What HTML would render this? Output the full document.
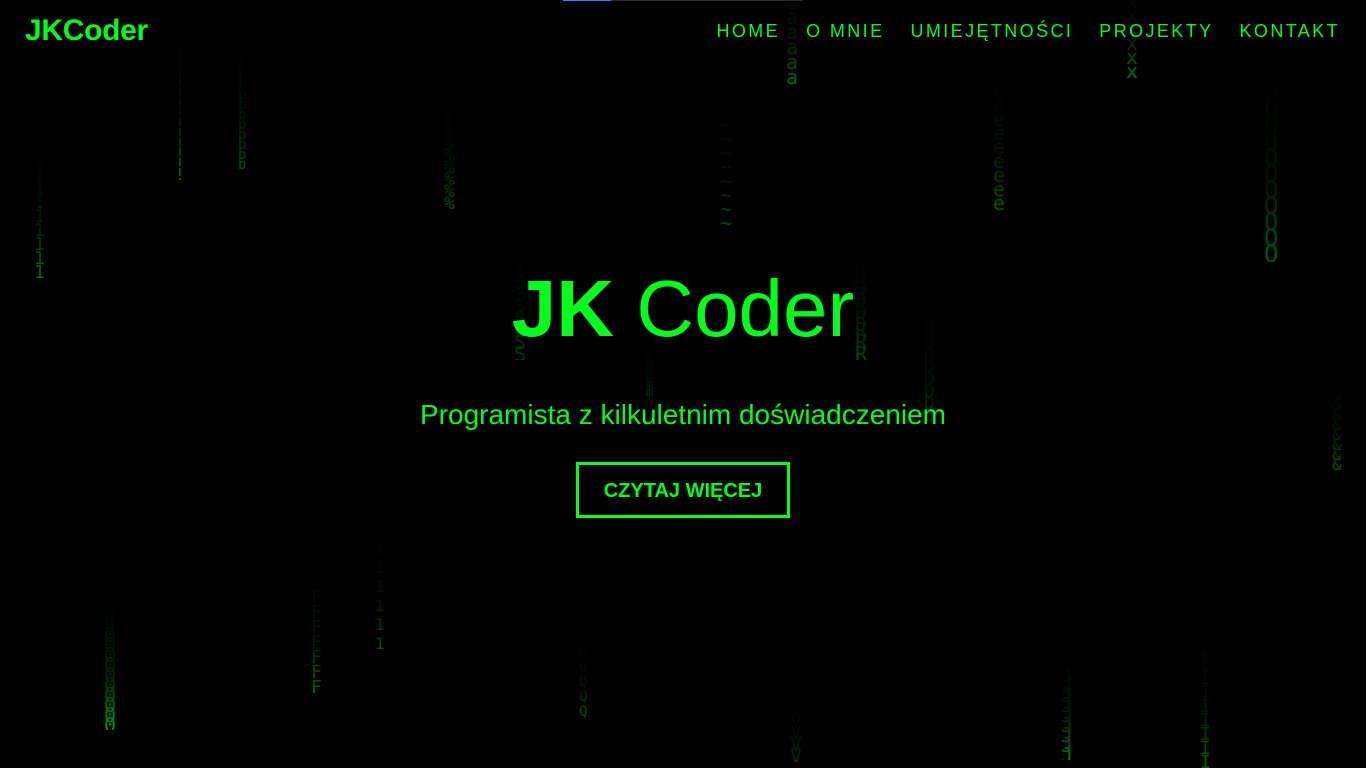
<!DOCTYPE html>
<html><head><meta charset="utf-8"><style>
html,body{margin:0;padding:0;background:#000;width:1366px;height:768px;overflow:hidden}
body{position:relative;font-family:"Liberation Sans",Arial,sans-serif;color:#00ff1a}
.bar{position:absolute;top:0;left:563px;width:240px;height:1px;background:#2a2a2a}
.bar i{position:absolute;left:0;top:0;width:48px;height:1px;background:#1a8cff}
.logo{position:absolute;left:25px;top:14px;font-size:30px;font-weight:bold;letter-spacing:-0.3px}
nav{position:absolute;right:26px;top:21px;font-size:18px;letter-spacing:2.4px}
nav span{margin-left:26px}
.c{position:absolute;font-family:"DejaVu Sans Mono",monospace;width:1ch;word-break:break-all;line-break:anywhere;text-align:center;color:#00d21a;
-webkit-mask-image:linear-gradient(to bottom,transparent,rgba(0,0,0,.25) 60%,#000);mask-image:linear-gradient(to bottom,transparent,rgba(0,0,0,.25) 60%,#000)}
h1{position:absolute;left:0;width:1366px;top:261px;margin:0;text-align:center;font-size:80px;font-weight:normal;line-height:96px}
h1 b{font-weight:bold}
.sub{position:absolute;left:0;width:1366px;top:399px;text-align:center;font-size:28px}
.btn{position:absolute;left:576px;top:462px;width:208px;height:50px;border:3px solid #00ff1a;font-weight:bold;font-size:20px;text-align:center;line-height:52px}
</style></head><body>
<div class="bar"><i></i></div>
<div class="c" style="left:34px;top:140px;font-size:18px;line-height:14px;opacity:.55">1111111111</div>
<div class="c" style="left:175px;top:30px;font-size:16px;line-height:10px;opacity:.6">!!!!!!!!!!!!!!!</div>
<div class="c" style="left:238px;top:40px;font-size:14px;line-height:10px;opacity:.45">bbbbbbbbbbbbb</div>
<div class="c" style="left:444px;top:90px;font-size:18px;line-height:12px;opacity:.45">%%%%%%%%%%</div>
<div class="c" style="left:720px;top:90px;font-size:20px;line-height:14px;opacity:.4">~~~~~~~~~~</div>
<div class="c" style="left:786px;top:-20px;font-size:20px;line-height:15px;opacity:.55">aaaaaaa</div>
<div class="c" style="left:993px;top:70px;font-size:20px;line-height:14px;opacity:.45">eeeeeeeeee</div>
<div class="c" style="left:1126px;top:-20px;font-size:20px;line-height:14px;opacity:.6">xxxxxxx</div>
<div class="c" style="left:1264px;top:70px;font-size:24px;line-height:16px;opacity:.45">QQQQQQQQQQQQ</div>
<div class="c" style="left:514px;top:240px;font-size:20px;line-height:12px;opacity:.3">SSSSSSSSSS</div>
<div class="c" style="left:855px;top:240px;font-size:20px;line-height:12px;opacity:.35">RRRRRRRRRR</div>
<div class="c" style="left:924px;top:290px;font-size:18px;line-height:12px;opacity:.25">DDDDDDDDDDD</div>
<div class="c" style="left:646px;top:340px;font-size:12px;line-height:8px;opacity:.3">mmmmmmm</div>
<div class="c" style="left:1332px;top:370px;font-size:16px;line-height:10px;opacity:.45">&amp;&amp;&amp;&amp;&amp;&amp;&amp;&amp;&amp;&amp;</div>
<div class="c" style="left:104px;top:600px;font-size:20px;line-height:10px;opacity:.75">0000000000000</div>
<div class="c" style="left:311px;top:560px;font-size:18px;line-height:15px;opacity:.5">FFFFFFFFF</div>
<div class="c" style="left:375px;top:520px;font-size:16px;line-height:19px;opacity:.45">1111111</div>
<div class="c" style="left:579px;top:630px;font-size:14px;line-height:15px;opacity:.45">QQQQQQ</div>
<div class="c" style="left:1061px;top:650px;font-size:20px;line-height:10px;opacity:.6">JJJJJJJJJJJ</div>
<div class="c" style="left:1200px;top:630px;font-size:18px;line-height:14px;opacity:.5">IIIIIIIIII</div>
<div class="c" style="left:790px;top:690px;font-size:20px;line-height:12px;opacity:.25">VVVVVV</div>
<div class="logo">JKCoder</div>
<nav><span>HOME</span><span>O MNIE</span><span>UMIEJĘTNOŚCI</span><span>PROJEKTY</span><span>KONTAKT</span></nav>
<h1><b>JK</b> Coder</h1>
<div class="sub">Programista z kilkuletnim doświadczeniem</div>
<div class="btn">CZYTAJ WIĘCEJ</div>
</body></html>
